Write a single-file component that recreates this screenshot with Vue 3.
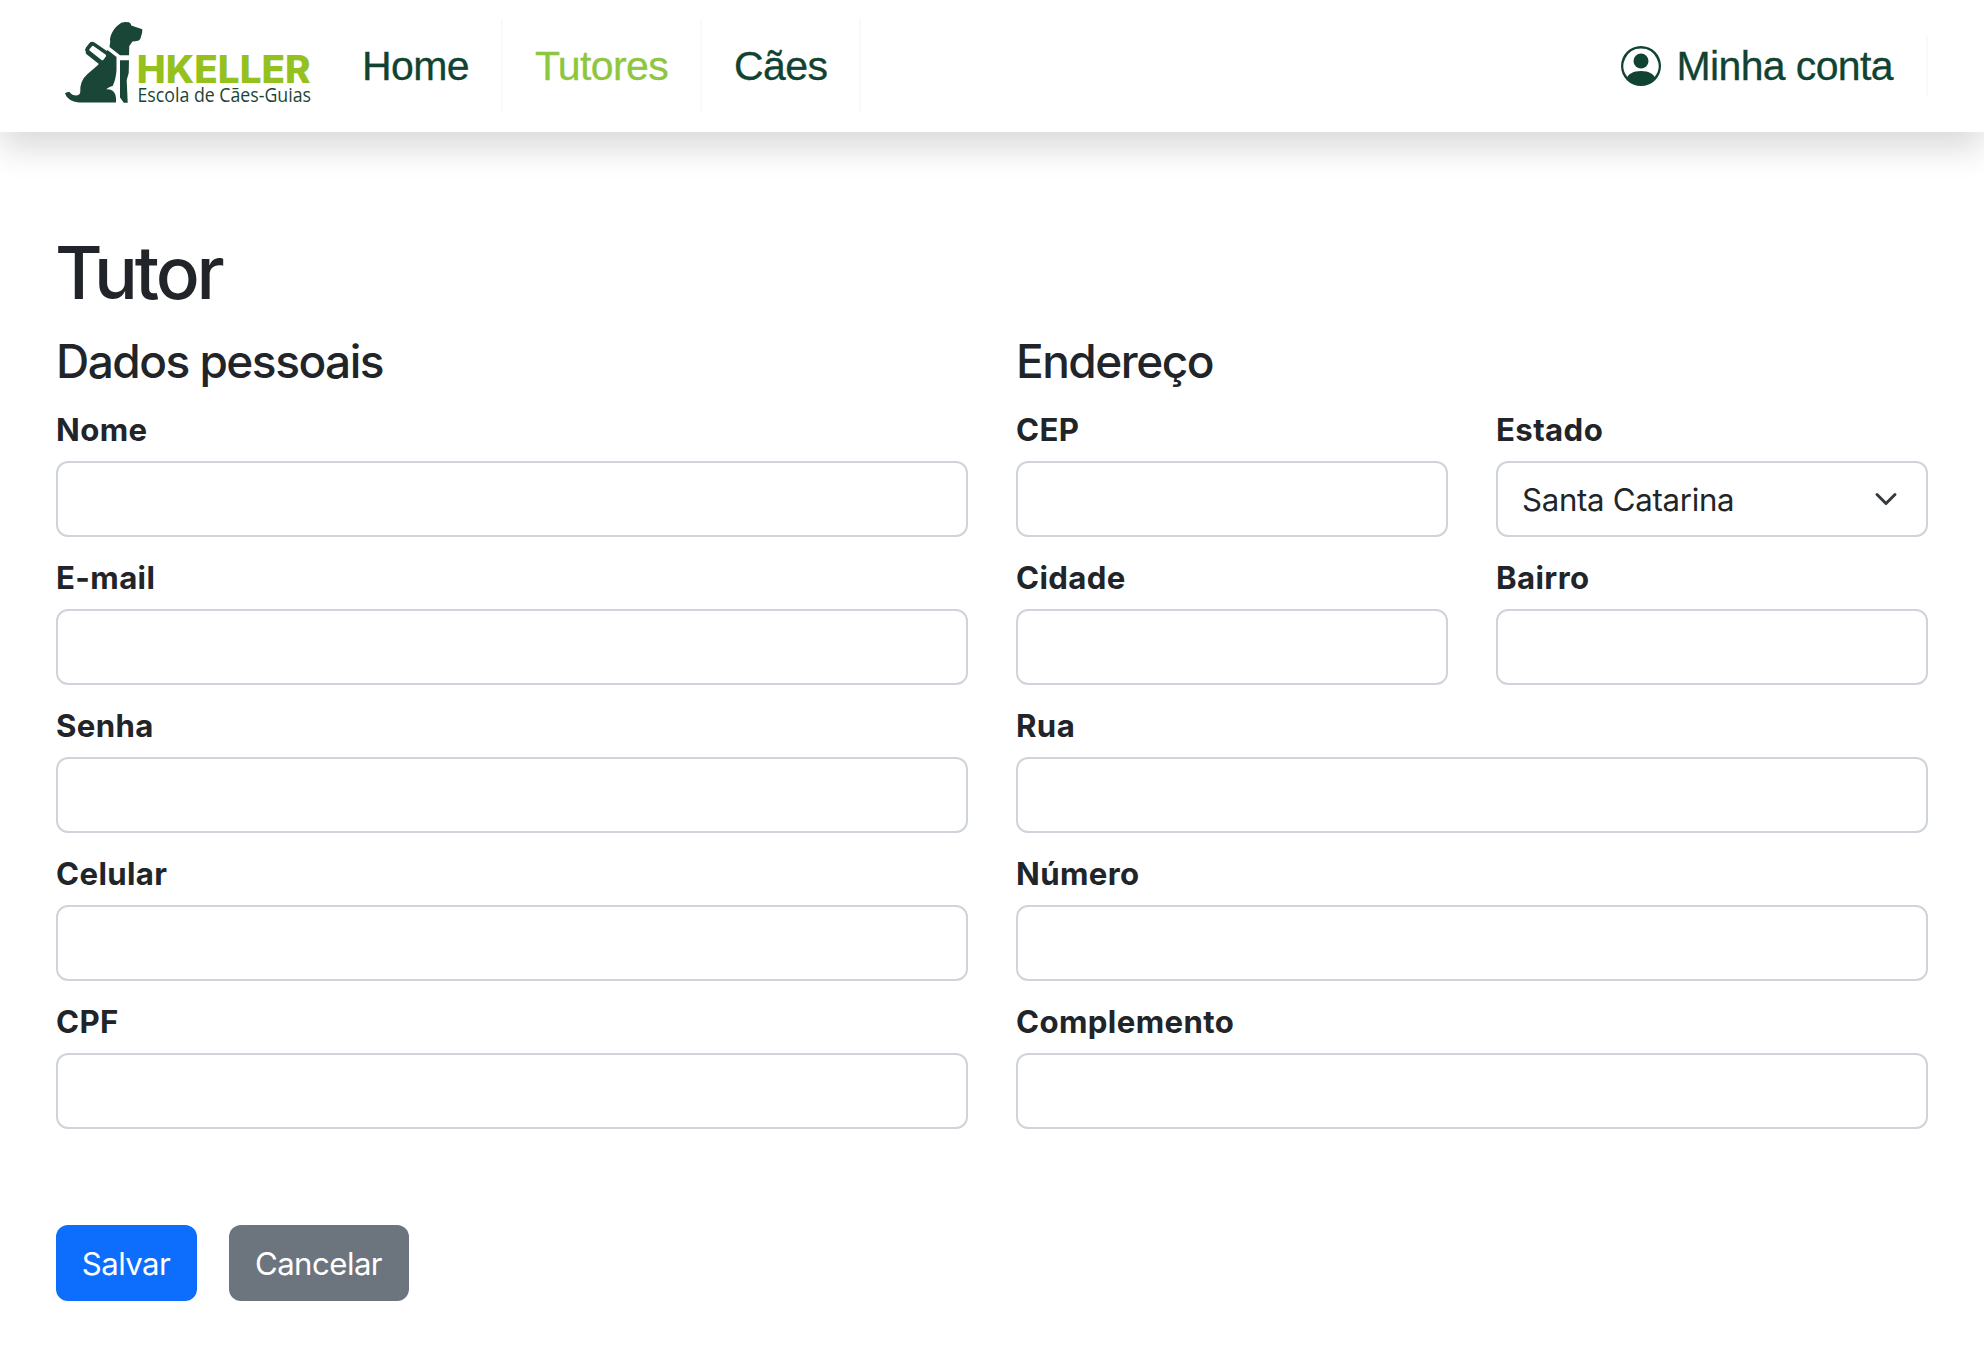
<script setup>
import { ref } from 'vue'

const links = [
  { label: 'Home' },
  { label: 'Tutores', active: true },
  { label: 'Cães' },
]

const personal = ['Nome', 'E-mail', 'Senha', 'Celular', 'CPF']

const address = [
  { label: 'CEP', half: true },
  { label: 'Estado', half: true, value: 'Santa Catarina' },
  { label: 'Cidade', half: true },
  { label: 'Bairro', half: true },
  { label: 'Rua' },
  { label: 'Número' },
  { label: 'Complemento' },
]

const state = ref('Santa Catarina')
</script>

<template>
  <div class="page">
    <header class="navbar">
      <a class="brand">
        <svg class="logo" width="260" height="92" viewBox="0 0 260 92" aria-label="HKELLER Escola de Cães-Guias">
          <g fill="#1a4637">
            <path d="M59 15 Q62 8 66.300 5 Q69 2 73 2 L77 2.200 Q79 3 79.300 5.500 L90.300 9.300 Q90.500 14 89 16.500 Q88.500 20 86 20.700 Q83 21.500 80.500 21.500 L77.300 26 L77 35.300 L68 35.300 L57.500 27 Q58.700 22 58 18.700 Z" />
            <path d="M55.500 30 L64.500 37 L64.500 50 Q64 59 60.700 66 Q55 67.500 54.500 69.500 Q58 68.800 61 71 Q63.800 73.500 64 78 L64 82.500 L27 82.500 Q15.500 81 13 73.500 Q14 71.500 17.500 72 Q20 75.500 24.500 75.500 Q28 75 28.300 72 Q27.500 61 35.500 54 L46 45 Z" />
            <path d="M68 40.300 L77 40.300 L76.700 53 L74.700 60 L75.700 82.700 L71.800 82.700 L68 77.500 Z" />
            <path d="M33.800 31.500 Q32.500 29.500 34 27.500 L37.500 23 Q39.700 20.800 42.500 22.500 L60 34.500 L53 47.500 L47.500 44.500 L35.500 35 Q33 33.500 33.800 31.500 Z" />
          </g>
          <path d="M37.500 30.500 Q37 29.700 37.600 29 L40 26.200 Q40.800 25.500 41.800 26.200 L53.500 34.500 Q54.500 35.200 54 36.200 L51.500 39.700 Q50.500 40.700 49.500 40 Z" fill="#fff" />
          <text class="wordmark" x="84.700" y="63" textLength="174" lengthAdjust="spacingAndGlyphs">HKELLER</text>
          <text class="tagline" x="85.500" y="82.300" textLength="173.500" lengthAdjust="spacingAndGlyphs">Escola de Cães-Guias</text>
        </svg>
      </a>
      <nav class="menu">
        <a v-for="link in links" :key="link.label" class="link" :class="{ active: link.active }">{{ link.label }}</a>
      </nav>
      <a class="account">
        <svg width="40" height="40" viewBox="0 0 16 16" fill="currentColor">
          <path d="M11 6a3 3 0 1 1-6 0 3 3 0 0 1 6 0" />
          <path fill-rule="evenodd" d="M0 8a8 8 0 1 1 16 0A8 8 0 0 1 0 8m8-7a7 7 0 0 0-5.468 11.370C3.242 11.226 4.805 10 8 10s4.757 1.225 5.468 2.370A7 7 0 0 0 8 1" />
        </svg>
        <span>Minha conta</span>
      </a>
    </header>

    <main class="content">
      <h1>Tutor</h1>
      <form @submit.prevent>
        <div class="columns">
          <section>
            <h2>Dados pessoais</h2>
            <div class="fields">
              <label v-for="name in personal" :key="name" class="field">
                <span>{{ name }}</span>
                <input class="control" />
              </label>
            </div>
          </section>
          <section>
            <h2>Endereço</h2>
            <div class="fields">
              <label v-for="f in address" :key="f.label" class="field" :class="{ half: f.half }">
                <span>{{ f.label }}</span>
                <div v-if="f.value" class="control select">
                  {{ state }}
                  <svg width="24" height="24" viewBox="0 0 16 16" fill="none" stroke="#343a40" stroke-width="2" stroke-linecap="round" stroke-linejoin="round">
                    <path d="m2 5 6 6 6-6" />
                  </svg>
                </div>
                <input v-else class="control" />
              </label>
            </div>
          </section>
        </div>
        <div class="actions">
          <button class="btn primary" type="submit">Salvar</button>
          <button class="btn secondary" type="button">Cancelar</button>
        </div>
      </form>
    </main>
  </div>
</template>

<style>
body {
  margin: 0;
  background: #fff;
}
</style>

<style scoped>
.page {
  min-height: 1354px;
  overflow: hidden;
  background: #fff;
  color: #212529;
  font-family: Inter, sans-serif;
}

.navbar {
  display: flex;
  align-items: center;
  box-sizing: border-box;
  height: 132px;
  padding: 0 56px 0 52px;
  background: #fff;
  box-shadow: 0 16px 32px rgba(0, 0, 0, 0.15);
  color: #104332;
  font: 41px/60px "Liberation Sans", Arial, sans-serif;
  letter-spacing: -0.620px;
  -webkit-text-stroke: 0.300px currentColor;
}

.brand {
  display: flex;
  width: 278px;
}

.logo {
  overflow: visible;
  letter-spacing: 0;
  -webkit-text-stroke: 0;
}

.wordmark {
  font: 800 38px Inter, sans-serif;
  fill: #95c11f;
}

.tagline {
  font: 400 19.800px "Open Sans", sans-serif;
  fill: #1a4637;
}

.menu {
  display: flex;
}

.link {
  padding: 16px 32px;
  border-right: 2px solid #f8f9fa;
}

.link.active {
  color: #8dc63f;
}

.account {
  display: flex;
  align-items: center;
  gap: 15px;
  margin-left: auto;
  padding-right: 33px;
  border-right: 2px solid #f8f9fa;
}

.content {
  padding: 96px 56px 53px;
}

h1,
h2 {
  margin: 0;
  font-weight: 500;
}

h1 {
  margin: 0 0 15px -1px;
  font-size: 73px;
  line-height: 89px;
  letter-spacing: -3.200px;
}

h2 {
  margin-bottom: 16px;
  font-size: 46px;
  line-height: 58px;
  letter-spacing: -1.520px;
}

.columns {
  display: grid;
  grid-template-columns: 1fr 1fr;
  gap: 48px;
}

.fields {
  display: grid;
  grid-template-columns: 1fr 1fr;
  gap: 17px 48px;
}

.field {
  display: flex;
  flex-direction: column;
  grid-column: span 2;
  gap: 7px;
  font-size: 31.200px;
  font-weight: 700;
  line-height: 48px;
  letter-spacing: 0.380px;
}

.field.half {
  grid-column: span 1;
}

.control {
  box-sizing: border-box;
  width: 100%;
  height: 76px;
  padding: 12px 24px;
  border: 2px solid #ced4da;
  border-radius: 12px;
  background: #fff;
  color: #212529;
  font: 400 31.200px/49px Inter, sans-serif;
  letter-spacing: -0.300px;
}

.select {
  display: flex;
  align-items: center;
  justify-content: space-between;
  padding: 13px 28px 10px 24px;
}

.select svg {
  margin-top: -3px;
}

.actions {
  display: flex;
  gap: 32px;
  margin-top: 96px;
}

.btn {
  height: 76px;
  padding: 1px 1px 0 0;
  border: 0;
  border-radius: 12px;
  color: #fff;
  font: 400 31.200px/48px Inter, sans-serif;
  letter-spacing: -0.550px;
}

.primary {
  width: 141px;
  background: #0d6efd;
}

.secondary {
  width: 180px;
  background: #6c757d;
}
</style>
